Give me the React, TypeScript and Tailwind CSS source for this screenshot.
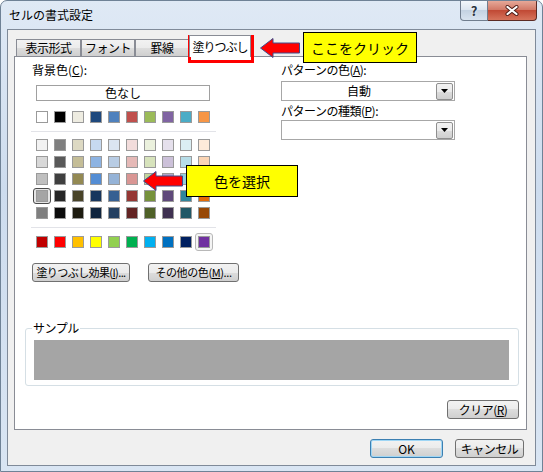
import React from 'react';

const TOP_ROW = ['#FFFFFF', '#000000', '#EEECE1', '#1F497D', '#4F81BD', '#C0504D', '#9BBB59', '#8064A2', '#4BACC6', '#F79646'];

const THEME_ROWS = [
  ['#F2F2F2', '#7F7F7F', '#DDD9C3', '#C6D9F0', '#DBE5F1', '#F2DCDB', '#EBF1DD', '#E5E0EC', '#DBEEF3', '#FDEADA'],
  ['#D8D8D8', '#595959', '#C4BD97', '#8DB3E2', '#B8CCE4', '#E5B9B7', '#D7E3BC', '#CCC1D9', '#B7DDE8', '#FBD5B5'],
  ['#BFBFBF', '#3F3F3F', '#938953', '#548DD4', '#95B3D7', '#D99694', '#C3D69B', '#B2A2C7', '#92CDDC', '#FAC08F'],
  ['#A5A5A5', '#262626', '#494429', '#17365D', '#366092', '#953734', '#76923C', '#5F497A', '#31859B', '#E36C09'],
  ['#7F7F7F', '#0C0C0C', '#1D1B10', '#0F243E', '#244061', '#632423', '#4F6128', '#3F3151', '#205867', '#974806'],
];

const STANDARD = ['#C00000', '#FF0000', '#FFC000', '#FFFF00', '#92D050', '#00B050', '#00B0F0', '#0070C0', '#002060', '#7030A0'];

const BTN_BG = 'bg-[linear-gradient(#f2f2f2,#ebebeb_50%,#dddddd_50%,#cfcfcf)]';

function Swatch({ color, selected, hover }: { color: string; selected?: boolean; hover?: boolean }) {
  return (
    <div className="relative w-[12px] h-[12px] shrink-0">
      {selected && (
        <div className="absolute -left-[3px] -top-[2px] w-[18px] h-[16px] rounded-[3px] border border-[#4a4a4a] bg-[#e6e6e6]" />
      )}
      {hover && (
        <div className="absolute -left-[3px] -top-[3px] w-[18px] h-[18px] rounded-[3px] border border-[#b8b8b8] bg-[#f4f4f4]" />
      )}
      <div className="relative w-full h-full border border-[#9a9a9a]" style={{ backgroundColor: color }} />
    </div>
  );
}

function WinButton({ children, className = '', primary }: { children: React.ReactNode; className?: string; primary?: boolean }) {
  return (
    <div
      className={`flex items-center justify-center h-[19px] rounded-[3px] border whitespace-nowrap ${BTN_BG} ${
        primary ? 'border-[#3c7fb1] shadow-[inset_0_0_0_1px_#9fd6f5]' : 'border-[#707070]'
      } ${className}`}
    >
      {children}
    </div>
  );
}

function Combo({ value }: { value?: string }) {
  return (
    <div className="flex items-center w-[174px] h-[20px] border border-[#a7a7a7] bg-white">
      <div className="flex-1 text-center text-[12px] leading-[14px]">{value}</div>
      <div className={`mr-px w-[17px] h-[17px] flex items-center justify-center border border-[#8f8f8f] rounded-[2px] ${BTN_BG}`}>
        <svg width="7" height="4" viewBox="0 0 7 4">
          <path d="M0 0h7L3.5 4z" fill="#000" />
        </svg>
      </div>
    </div>
  );
}

function Arrow({ className }: { className: string }) {
  return (
    <svg className={`absolute ${className}`} viewBox="0 0 42 22">
      <path d="M1.5 11L14 1.5V6H40.5V16H14V20.5Z" fill="#ff0000" stroke="#3f4d8c" strokeWidth="1" strokeLinejoin="miter" />
    </svg>
  );
}

function Tab({ label, width }: { label: string; width: string }) {
  return (
    <div
      className={`${width} h-[17px] flex items-center justify-center border border-b-0 border-[#898c95] text-[12px] leading-[14px] tracking-[-0.5px] ${BTN_BG}`}
    >
      {label}
    </div>
  );
}

export default function App() {
  return (
    <div className="relative w-[543px] h-[472px] overflow-hidden whitespace-nowrap rounded-t-[7px] border border-[#6f8296] bg-[linear-gradient(#dfe9f5,#cddcee_40%,#d9e5f3)] font-['Noto_Sans_CJK_JP','Liberation_Sans',sans-serif] text-black">
      {/* TITLE BAR */}
      <div className="flex items-start justify-between h-[28px]">
        <div className="pl-[8px] pt-[7px] text-[12px] leading-[14px] text-black">セルの書式設定</div>
        <div className="flex mr-[5px]">
          <div className="w-[28px] h-[20px] flex items-center justify-center rounded-bl-[4px] border border-t-0 border-[#707d8e] bg-[linear-gradient(#f3f7fb,#dde6f0_45%,#c4d2e2_50%,#d8e3ef)]">
            <span className="text-[13px] leading-[14px] font-bold text-[#2b3440] [text-shadow:0_0_2px_#fff]">?</span>
          </div>
          <div className="w-[49px] h-[20px] flex items-center justify-center rounded-br-[4px] border border-l-0 border-t-0 border-[#5b2a24] bg-[linear-gradient(#e6a898,#d27a68_45%,#c14a35_50%,#d6745c)]">
            <svg width="14" height="11" viewBox="0 0 14 11">
              <path d="M2.5 2L11.5 9M11.5 2L2.5 9" stroke="#4a1a14" strokeWidth="4" strokeLinecap="round" />
              <path d="M2.5 2L11.5 9M11.5 2L2.5 9" stroke="#ffffff" strokeWidth="2.2" strokeLinecap="round" />
            </svg>
          </div>
        </div>
      </div>

      {/* CLIENT AREA */}
      <div className="mx-[6px] h-[437px] border border-[#7f8a99] bg-[#f0f0f0]">
        <div className="ml-[6px] mt-[5px] w-[513px]">
          {/* TABS */}
          <div className="flex items-end h-[21px] pl-[2px]">
            <Tab label="表示形式" width="w-[65px]" />
            <Tab label="フォント" width="w-[54px]" />
            <Tab label="罫線" width="w-[54px]" />
            <div className="relative z-10 -mb-px w-[62px] h-[22px] flex items-center justify-center border border-b-0 border-[#898c95] bg-white text-[12px] leading-[14px] tracking-[-1px]">
              塗りつぶし
            </div>
          </div>

          {/* PANEL */}
          <div className="flex flex-col h-[374px] border border-[#898c95] bg-white">
            <div className="flex">
              {/* LEFT COLUMN */}
              <div className="w-[266px] pl-[17px] pt-[6px]">
                <div className="text-[12px] leading-[14px]">
                  背景色(<span className="underline">C</span>):
                </div>
                <div className="mt-[8px] ml-[4px] w-[174px] h-[16px] flex items-center justify-center border border-[#a0a0a0] text-[12px] leading-[14px]">
                  色なし
                </div>
                <div className="ml-[4px] mt-[10px]">
                  <div className="flex gap-[6px]">
                    {TOP_ROW.map((c) => (
                      <Swatch key={c} color={c} />
                    ))}
                  </div>
                  <div className="mt-[8px] -ml-[5px] w-[185px] h-px bg-[#e2e3e8]" />
                  <div className="mt-[7px] flex flex-col gap-[5px]">
                    {THEME_ROWS.map((row, r) => (
                      <div key={r} className="flex gap-[6px]">
                        {row.map((c, i) => (
                          <Swatch key={i} color={c} selected={r === 3 && i === 0} />
                        ))}
                      </div>
                    ))}
                  </div>
                  <div className="mt-[8px] -ml-[5px] w-[185px] h-px bg-[#e2e3e8]" />
                  <div className="mt-[8px] flex gap-[6px]">
                    {STANDARD.map((c, i) => (
                      <Swatch key={c} color={c} hover={i === 9} />
                    ))}
                  </div>
                </div>
                <div className="mt-[15px] flex gap-[18px]">
                  <WinButton className="w-[98px] text-[11px] leading-[13px] tracking-[-0.6px]">
                    塗りつぶし効果(<span className="underline">I</span>)...
                  </WinButton>
                  <WinButton className="w-[91px] text-[11px] leading-[13px] tracking-[-0.4px]">
                    その他の色(<span className="underline">M</span>)...
                  </WinButton>
                </div>
              </div>

              {/* RIGHT COLUMN */}
              <div className="pt-[6px]">
                <div className="text-[12px] leading-[14px] tracking-[-0.5px]">
                  パターンの色(<span className="underline">A</span>):
                </div>
                <div className="mt-[4px]">
                  <Combo value="自動" />
                </div>
                <div className="mt-[3px] text-[12px] leading-[14px] tracking-[-0.5px]">
                  パターンの種類(<span className="underline">P</span>):
                </div>
                <div className="mt-[2px]">
                  <Combo />
                </div>
              </div>
            </div>

            {/* SAMPLE */}
            <fieldset className="mt-[39px] ml-[10px] w-[494px] border border-[#d5dfe5] rounded-[3px]">
              <legend className="ml-[6px] px-px text-[12px] leading-[14px] tracking-[-0.5px]">サンプル</legend>
              <div className="mt-[5px] mb-[5px] ml-[8px] w-[475px] h-[40px] bg-[#a5a5a5]" />
            </fieldset>

            <div className="mt-[14px] mr-[7px] self-end">
              <WinButton className="w-[72px] text-[12px] leading-[14px] tracking-[-0.5px]">
                クリア(<span className="underline">R</span>)
              </WinButton>
            </div>
          </div>
        </div>

        {/* DIALOG BUTTONS */}
        <div className="mt-[9px] pr-[11px] flex justify-end gap-[12px]">
          <WinButton className="w-[73px] text-[12px] leading-[14px]" primary>
            OK
          </WinButton>
          <WinButton className="w-[69px] text-[12px] leading-[14px] tracking-[-0.5px]">キャンセル</WinButton>
        </div>
      </div>

      {/* ANNOTATIONS */}
      <div className="absolute left-[187px] top-[34px] w-[66px] h-[28px] border-[3px] border-[#ff0000]" />
      <Arrow className="left-[258px] top-[36px] w-[42px] h-[22px]" />
      <div className="absolute left-[302px] top-[31px] w-[114px] h-[31px] flex items-center justify-center border border-black bg-[#ffff00] text-[14px] leading-[16px]">
        ここをクリック
      </div>
      <Arrow className="left-[139px] top-[169px] w-[46px] h-[22px]" />
      <div className="absolute left-[185px] top-[164px] w-[112px] h-[32px] flex items-center justify-center border border-black bg-[#ffff00] text-[14px] leading-[16px]">
        色を選択
      </div>
    </div>
  );
}
